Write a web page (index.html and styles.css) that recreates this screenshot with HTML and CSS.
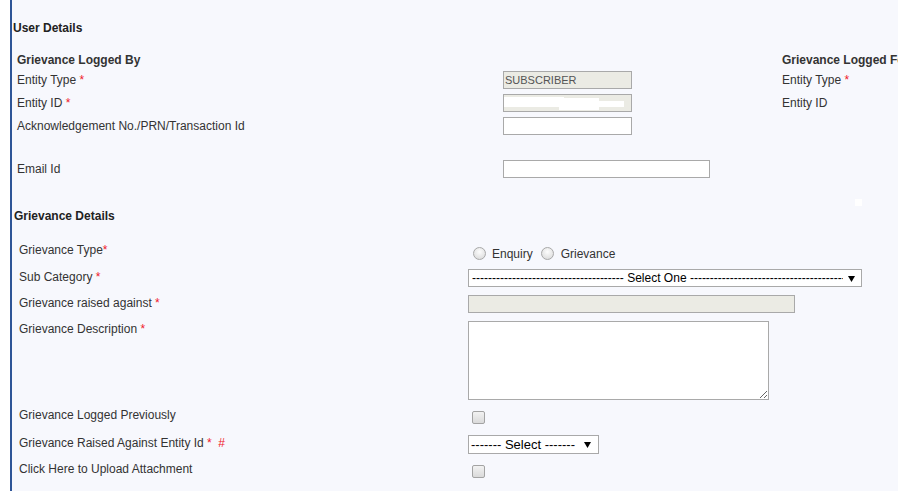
FILE: index.html
```html
<!DOCTYPE html>
<html lang="en">
<head>
<meta charset="UTF-8">
<meta name="viewport" content="width=device-width, initial-scale=1.0">
<title>Grievance Form</title>
<link rel="stylesheet" href="styles.css">
</head>
<body>

<div class="page">
    <h3 class="section-title">User Details</h3>

    <div class="urow first">
        <div class="lbl"><b>Grievance Logged By</b></div>
        <div class="ctl"></div>
        <div class="side"><b>Grievance Logged For</b></div>
    </div>
    <div class="urow second">
        <div class="lbl">Entity Type <span class="req">*</span></div>
        <div class="ctl"><input type="text" class="txt" value="SUBSCRIBER" disabled></div>
        <div class="side">Entity Type <span class="req">*</span></div>
    </div>
    <div class="urow">
        <div class="lbl">Entity ID <span class="req">*</span></div>
        <div class="ctl"><input type="text" class="txt masked" value="" disabled></div>
        <div class="side">Entity ID</div>
    </div>
    <div class="urow">
        <div class="lbl">Acknowledgement No./PRN/Transaction Id</div>
        <div class="ctl"><input type="text" class="txt"></div>
        <div class="side"></div>
    </div>
    <div class="urow email">
        <div class="lbl">Email Id</div>
        <div class="ctl"><input type="text" class="txt txt-email"></div>
        <div class="side"></div>
    </div>

    <h3 class="section-title gd">Grievance Details</h3>
    <span class="dot"></span>

    <div class="grow h27">
        <div class="glbl">Grievance Type<span class="req">*</span></div>
        <div class="radios">
            <input type="radio" name="gtype" id="enq"><label for="enq">Enquiry</label>
            <input type="radio" name="gtype" id="grv"><label for="grv">Grievance</label>
        </div>
    </div>
    <div class="grow h26">
        <div class="glbl">Sub Category <span class="req">*</span></div>
        <select class="sel sel-wide">
            <option>-------------------------------------- Select One ---------------------------------------</option>
        </select>
    </div>
    <div class="grow h26">
        <div class="glbl">Grievance raised against <span class="req">*</span></div>
        <input type="text" class="txt txt-against" disabled>
    </div>
    <div class="grow h86">
        <div class="glbl">Grievance Description <span class="req">*</span></div>
        <textarea class="desc"></textarea>
    </div>
    <div class="grow h28">
        <div class="glbl">Grievance Logged Previously</div>
        <input type="checkbox" class="chk">
    </div>
    <div class="grow h26">
        <div class="glbl">Grievance Raised Against Entity Id <span class="req">*</span> <span class="req hash">#</span></div>
        <select class="sel sel-small">
            <option>------- Select -------</option>
        </select>
    </div>
    <div class="grow h28">
        <div class="glbl">Click Here to Upload Attachment</div>
        <input type="checkbox" class="chk">
    </div>
</div>

</body>
</html>
```

FILE: styles.css
```css
html, body {
    margin: 0;
    padding: 0;
    background-color: #fff;
    overflow: hidden;
}
body {
    font-family: "Liberation Sans", Arial, sans-serif;
    font-size: 12px;
    color: #333;
}
.page {
    position: relative;
    margin-left: 10px;
    border-left: 2px solid #2e5597;
    background-color: #f7f8fd;
    min-height: 600px;
    padding-top: 20px;
    padding-left: 1px;
}
.section-title {
    margin: 0;
    font-size: 12px;
    line-height: 16px;
    color: #222;
}
.section-title.gd {
    margin-top: 30px;
    margin-bottom: 18px;
    padding-left: 1px;
}
.dot {
    position: absolute;
    left: 843px;
    top: 199px;
    width: 7px;
    height: 7px;
    background-color: #fff;
}
.req {
    color: #f0192a;
}
.hash {
    margin-left: 3px;
}

/* user details rows */
.urow {
    display: flex;
    align-items: center;
    height: 18px;
    margin-top: 5px;
    padding-left: 4px;
    white-space: nowrap;
}
.urow.first {
    margin-top: 15px;
}
.urow.second {
    margin-top: 2px;
}
.urow.email {
    margin-top: 25px;
}
.lbl {
    width: 486px;
    flex: none;
    line-height: 14px;
}
.ctl {
    width: 279px;
    flex: none;
    display: flex;
}
.side {
    line-height: 14px;
}
.txt {
    box-sizing: border-box;
    width: 129px;
    height: 18px;
    margin: 0;
    padding: 0 1px;
    border: 1px solid #a9a9a9;
    background-color: #fff;
    font-family: "Liberation Sans", Arial, sans-serif;
    font-size: 11px;
    color: #545454;
}
.txt:disabled {
    background-color: #ebebe4;
}
.txt.masked {
    background-image:
        linear-gradient(#fff, #fff),
        linear-gradient(#fff, #fff),
        linear-gradient(#fff, #fff);
    background-size: 60px 10px, 40px 12px, 28px 6px;
    background-position: 0 2px, 55px 3px, 92px 6px;
    background-repeat: no-repeat;
}
.txt-email {
    width: 207px;
}

/* grievance rows */
.grow {
    display: flex;
    align-items: flex-start;
    padding-left: 6px;
    white-space: nowrap;
}
.glbl {
    width: 449px;
    flex: none;
    line-height: 14px;
    padding-top: 1px;
}
.h26 { height: 26px; }
.h27 { height: 27px; }
.h28 { height: 28px; }
.h86 { height: 86px; }

.radios {
    display: flex;
    align-items: center;
    height: 14px;
    margin-top: 4px;
}
.radios label {
    margin-right: 8px;
    line-height: 14px;
    padding-top: 2px;
}
input[type="radio"] {
    appearance: none;
    -webkit-appearance: none;
    box-sizing: border-box;
    width: 13px;
    height: 13px;
    margin: 0 6px 0 5px;
    border: 1px solid #a8a8a8;
    border-radius: 50%;
    background: radial-gradient(circle at 50% 35%, #fdfdfd, #d6d6d6);
}
input[type="radio"] + label + input[type="radio"] {
    margin-left: 0;
    margin-right: 7px;
}
.chk {
    appearance: none;
    -webkit-appearance: none;
    box-sizing: border-box;
    width: 13px;
    height: 13px;
    margin: 4px 0 0 4px;
    border: 1px solid #a3a3a3;
    border-radius: 2px;
    background: linear-gradient(#f2f2f2, #dadada);
}
.sel {
    appearance: none;
    -webkit-appearance: none;
    box-sizing: border-box;
    height: 18px;
    margin: 0;
    padding: 0 18px 0 3px;
    border: 1px solid #a9a9a9;
    border-radius: 0;
    font-family: "Liberation Sans", Arial, sans-serif;
    font-size: 12px;
    color: #000;
    background-color: #fff;
    background-image: url("data:image/svg+xml,%3Csvg xmlns='http://www.w3.org/2000/svg' width='7' height='7'%3E%3Cpath d='M0 1h7L3.5 7z' fill='%23000'/%3E%3C/svg%3E");
    background-repeat: no-repeat;
    background-position: right 6px center;
}
.sel-wide {
    width: 394px;
}
.sel-small {
    width: 131px;
    height: 19px;
    font-size: 13px;
    padding-left: 2px;
    background-position: right 7px center;
}
.txt-against {
    width: 327px;
}
.desc {
    box-sizing: border-box;
    width: 301px;
    height: 79px;
    margin: 0;
    border: 1px solid #a9a9a9;
    background-color: #fff;
}
```
